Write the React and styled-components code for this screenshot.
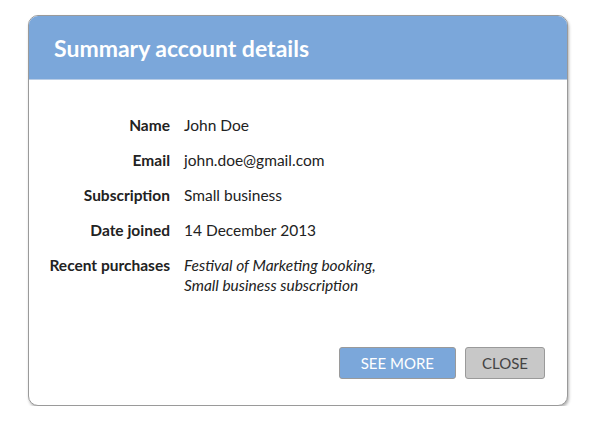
import React from "react";
import styled, { createGlobalStyle } from "styled-components";

const Global = createGlobalStyle`
  body {
    margin: 0;
    background: #fff;
    font-family: "Lato", "Noto Sans", sans-serif;
  }
`;

const Page = styled.div`
  padding: 15px 0 0 28px;
`;

const Dialog = styled.div`
  width: 538px;
  height: 389px;
  border: 1px solid #9a9a9a;
  border-radius: 10px;
  box-shadow: 1px 2px 3px rgba(0, 0, 0, 0.3);
  overflow: hidden;
  display: flex;
  flex-direction: column;
  background: #fff;
`;

const Header = styled.header`
  height: 63px;
  background: #7ba7da;
  border-bottom: 1px solid #b9cde6;
  display: flex;
  align-items: center;
  padding-left: 25px;
`;

const Title = styled.h1`
  margin: 0;
  color: #fff;
  font-size: 23px;
  font-weight: 700;
`;

const Details = styled.dl`
  margin: 0;
  padding: 35px 0 0;
  display: grid;
  grid-template-columns: 141px 1fr;
  column-gap: 14px;
  row-gap: 15px;
  font-size: 15.5px;
  line-height: 20px;
  color: #222;
`;

const Label = styled.dt`
  text-align: right;
  font-weight: 700;
`;

const Value = styled.dd`
  margin: 0;
  font-style: ${(p) => (p.italic ? "italic" : "normal")};
`;

const Footer = styled.div`
  margin-top: auto;
  display: flex;
  justify-content: flex-end;
  gap: 9px;
  padding: 0 22px 26px 0;
`;

const Button = styled.button`
  height: 32px;
  padding: 0 ${(p) => p.pad}px;
  border: 1px solid #9a9a9a;
  border-radius: 3px;
  background: ${(p) => (p.primary ? "#7ba7da" : "#c8c8c8")};
  color: ${(p) => (p.primary ? "#fff" : "#444")};
  font-family: inherit;
  font-size: 15px;
  text-transform: uppercase;
`;

const rows = [
  ["Name", "John Doe"],
  ["Email", "john.doe@gmail.com"],
  ["Subscription", "Small business"],
  ["Date joined", "14 December 2013"],
];

export default function App() {
  return (
    <Page>
      <Global />
      <Dialog>
        <Header>
          <Title>Summary account details</Title>
        </Header>
        <Details>
          {rows.map(([k, v]) => (
            <React.Fragment key={k}>
              <Label>{k}</Label>
              <Value>{v}</Value>
            </React.Fragment>
          ))}
          <Label>Recent purchases</Label>
          <Value italic>
            Festival of Marketing booking,
            <br />
            Small business subscription
          </Value>
        </Details>
        <Footer>
          <Button primary pad={21}>See more</Button>
          <Button pad={16}>Close</Button>
        </Footer>
      </Dialog>
    </Page>
  );
}
